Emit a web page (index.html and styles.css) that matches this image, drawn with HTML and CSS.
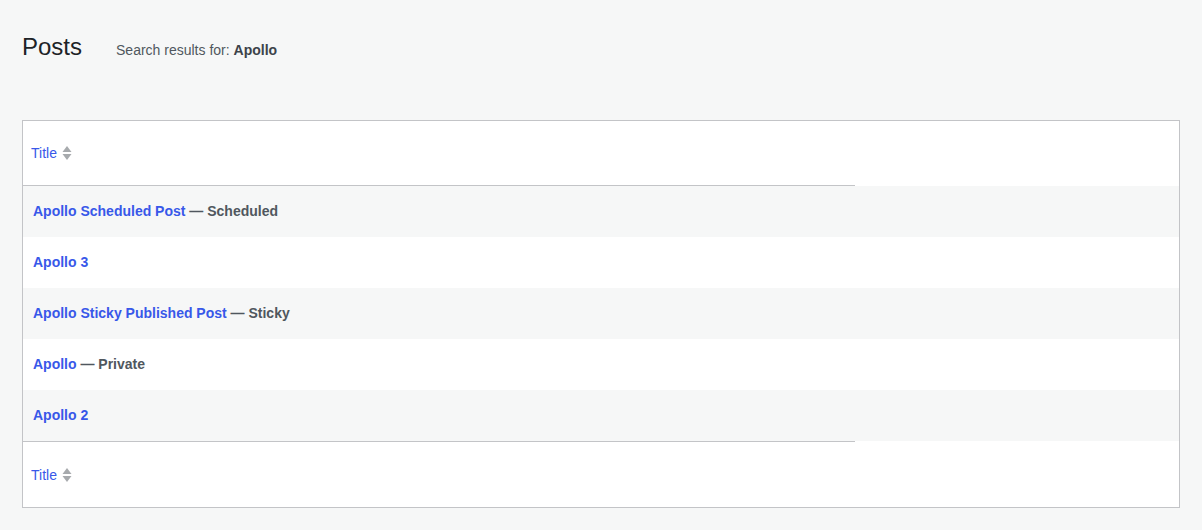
FILE: index.html
```html
<!DOCTYPE html>
<html>
<head>
<meta charset="utf-8">
<link rel="stylesheet" href="styles.css">
</head>
<body>
<div class="wrap">
  <div class="page-head">
    <h1 class="page-title">Posts</h1>
    <span class="subtitle">Search results for: <strong>Apollo</strong></span>
  </div>
  <div class="list-table">
    <div class="head-row">
      <div class="head-cell">
        <a class="sort-link" href="#">Title <svg class="sort-icon" width="10" height="16" viewBox="0 0 10 16"><path d="M5 1 L9.5 7 L0.5 7 Z" fill="#a7aaad"/><path d="M5 15 L9.5 9 L0.5 9 Z" fill="#a7aaad"/></svg></a>
      </div>
    </div>
    <div class="row alt"><a class="row-title" href="#">Apollo Scheduled Post</a><span class="state"> — Scheduled</span></div>
    <div class="row"><a class="row-title" href="#">Apollo 3</a></div>
    <div class="row alt"><a class="row-title" href="#">Apollo Sticky Published Post</a><span class="state"> — Sticky</span></div>
    <div class="row"><a class="row-title" href="#">Apollo</a><span class="state"> — Private</span></div>
    <div class="row alt"><a class="row-title" href="#">Apollo 2</a></div>
    <div class="foot-row">
      <div class="foot-cell">
        <a class="sort-link" href="#">Title <svg class="sort-icon" width="10" height="16" viewBox="0 0 10 16"><path d="M5 1 L9.5 7 L0.5 7 Z" fill="#a7aaad"/><path d="M5 15 L9.5 9 L0.5 9 Z" fill="#a7aaad"/></svg></a>
      </div>
    </div>
  </div>
</div>
</body>
</html>
```
FILE: styles.css
```css
html, body {
  margin: 0;
  padding: 0;
  background: #f6f7f7;
  font-family: "Liberation Sans", Arial, sans-serif;
  color: #1d2327;
}
.wrap {
  padding: 30px 22px 0 22px;
}
.page-head {
  display: flex;
  align-items: baseline;
  height: 90px;
}
.page-title {
  margin: 0;
  font-size: 24px;
  font-weight: 400;
  line-height: 34px;
  color: #1d2327;
}
.subtitle {
  margin-left: 34px;
  font-size: 14px;
  color: #50575e;
}
.subtitle strong {
  font-weight: 700;
  color: #3c434a;
}
.list-table {
  background: #fff;
  border: 1px solid #c3c4c7;
}
.head-cell, .foot-cell {
  width: 824px;
  height: 64px;
  display: flex;
  align-items: center;
  padding-left: 8px;
}
.head-row {
  height: 65px;
  display: flex;
  align-items: flex-start;
  background: #fff;
}
.head-row .head-cell {
  border-bottom: 1px solid #c3c4c7;
}
.foot-row {
  height: 66px;
  display: flex;
  align-items: flex-start;
  background: #fff;
}
.foot-row .foot-cell {
  border-top: 1px solid #c3c4c7;
  height: 65px;
}
.sort-link {
  color: #3858e9;
  text-decoration: none;
  font-size: 14px;
  display: flex;
  align-items: center;
  gap: 5px;
}
.sort-icon {
  display: block;
}
.row {
  height: 51px;
  box-sizing: border-box;
  display: flex;
  align-items: center;
  padding-left: 10px;
  padding-bottom: 2px;
  font-size: 14px;
  font-weight: 700;
  background: #fff;
}
.row.alt {
  background: #f6f7f7;
}
.row-title {
  color: #3858e9;
  text-decoration: none;
  font-weight: 700;
}
.state {
  color: #50575e;
  font-weight: 700;
  white-space: pre;
}
```
